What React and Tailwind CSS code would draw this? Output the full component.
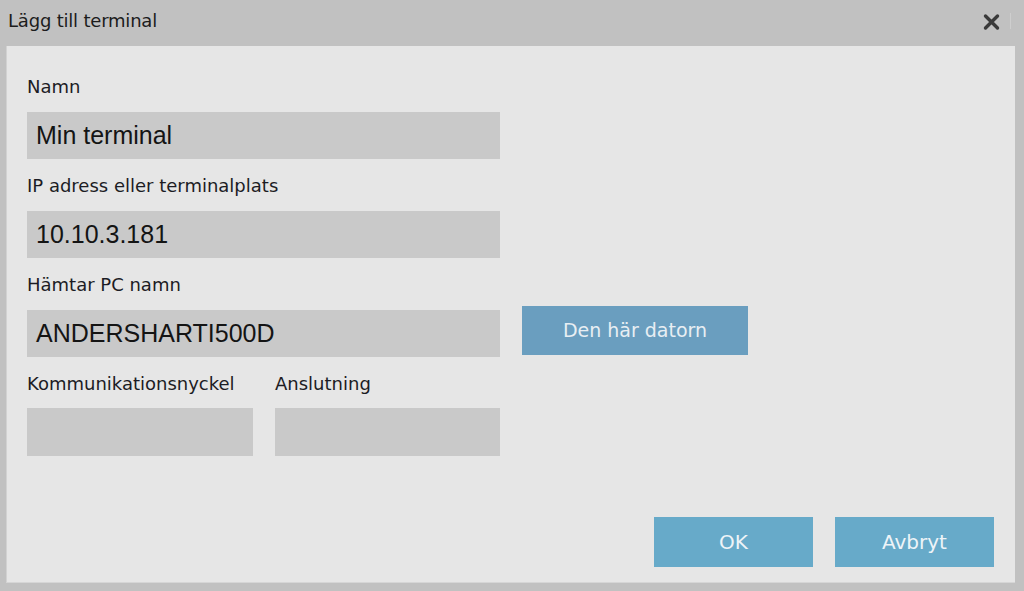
export default function App() {
  const label = "block h-[22px] leading-[22px] text-[18px] text-[#1c1c24]";
  const input = "h-[47px] bg-[#c9c9c9] flex items-center pl-[9px] text-[25px] text-[#141414]";
  const lab = { fontFamily: '"DejaVu Sans", sans-serif' };
  const fld = { fontFamily: '"Liberation Sans", Arial, sans-serif' };
  return (
    <div className="w-[1024px] h-[591px] bg-[#c1c1c1] flex flex-col overflow-hidden" style={lab}>
      <div className="h-[46px] flex items-center justify-between pl-[8px] pr-[13px] pb-[4px]">
        <span className="text-[18px] leading-[22px] text-[#1c1c1c] tracking-[-0.2px]">Lägg till terminal</span>
        <div className="flex items-center gap-[9px]">
          <svg width="19" height="18" viewBox="0 0 19 18" className="mt-[2px]">
            <path d="M3.5 3 L15.5 15 M15.5 3 L3.5 15" stroke="#3a3a3a" strokeWidth="3.4" strokeLinecap="round" />
          </svg>
          <div className="w-[1px] h-[16px] bg-[#cecece]" />
        </div>
      </div>
      <div className="ml-[6px] mr-[9px] h-[537px] bg-[#e6e6e6] border-l border-[#d2d2d2] border-b border-b-[#d6d6d6] flex flex-col pl-[20px] pt-[30px] pr-[21px] pb-[15px]">
        <span className={label}>Namn</span>
        <div className={`${input} w-[473px] mt-[14px]`} style={fld}>Min terminal</div>
        <span className={`${label} mt-[16px]`}>IP adress eller terminalplats</span>
        <div className={`${input} w-[473px] mt-[14px]`} style={fld}>10.10.3.181</div>
        <span className={`${label} mt-[16px]`}>Hämtar PC namn</span>
        <div className="flex items-start gap-[22px] mt-[14px]">
          <div className={`${input} w-[473px]`} style={fld}>ANDERSHARTI500D</div>
          <button className="w-[226px] h-[49px] -mt-[4px] bg-[#6a9ebf] text-[#e8eef3] text-[19px] flex items-center justify-center">
            Den här datorn
          </button>
        </div>
        <div className="flex gap-[22px] mt-[16px]">
          <div className="flex flex-col w-[226px]">
            <span className={label}>Kommunikationsnyckel</span>
            <div className="h-[48px] bg-[#c9c9c9] mt-[13px]" />
          </div>
          <div className="flex flex-col w-[225px]">
            <span className={label}>Anslutning</span>
            <div className="h-[48px] bg-[#c9c9c9] mt-[13px]" />
          </div>
        </div>
        <div className="flex-1" />
        <div className="flex justify-end gap-[22px]">
          <button className="w-[159px] h-[50px] bg-[#67aac9] text-[#eef4f8] text-[20px] flex items-center justify-center">OK</button>
          <button className="w-[159px] h-[50px] bg-[#67aac9] text-[#eef4f8] text-[20px] flex items-center justify-center">Avbryt</button>
        </div>
      </div>
    </div>
  );
}
